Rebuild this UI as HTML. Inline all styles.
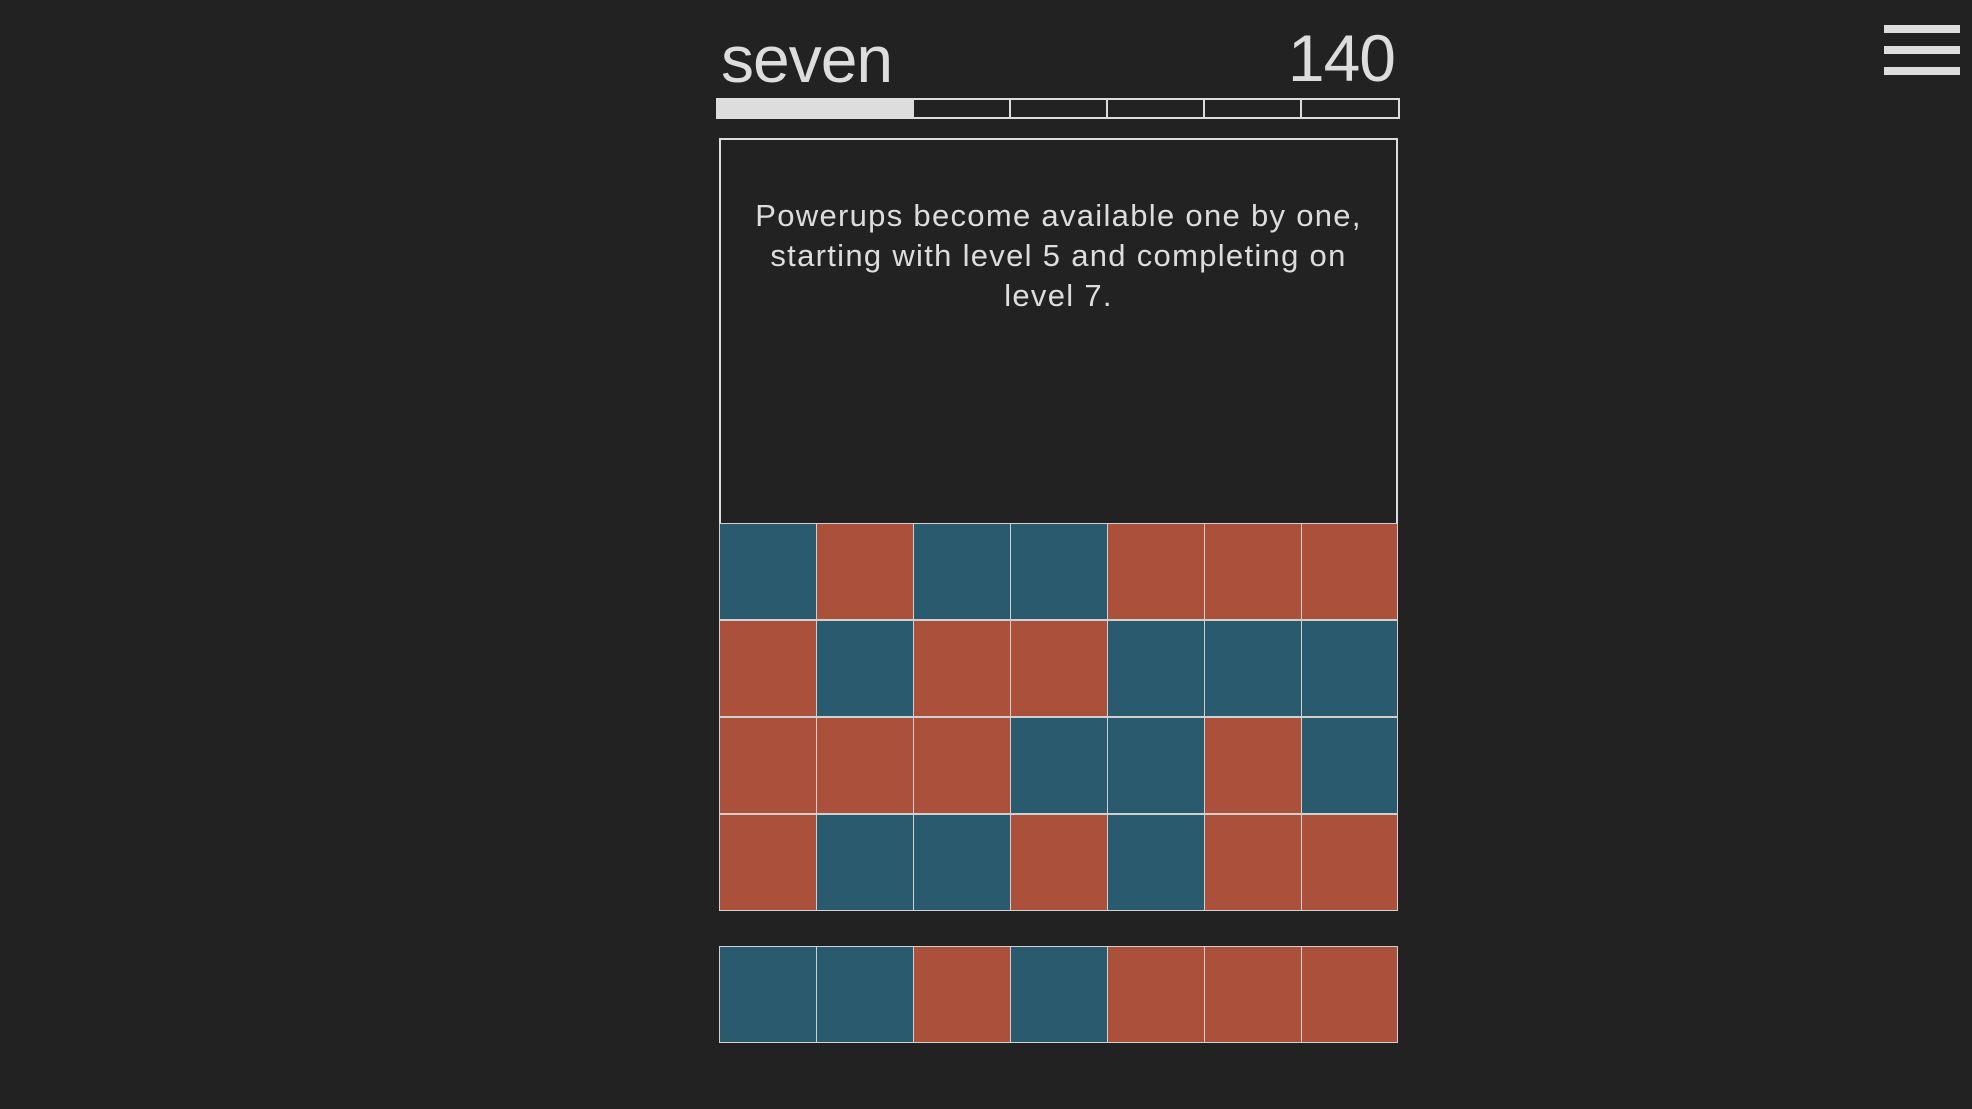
<!DOCTYPE html>
<html><head><meta charset="utf-8"><style>
html,body{margin:0;padding:0;background:#222;width:1972px;height:1109px;overflow:hidden;font-family:"Liberation Sans",sans-serif;color:#ddd}
.abs{position:absolute}
.bar{position:absolute;left:1884px;width:76px;height:8px;background:#ddd}
.seg{position:absolute;top:98px;height:21px;box-sizing:border-box;border:2px solid #ddd}
.cell{position:absolute;width:97px;height:97px;box-sizing:border-box;border:1px solid #d0d0d0}
.b{background:#295a6d}.r{background:#ab503b}
</style></head><body>
<div class="abs" style="left:721px;top:19px;font-size:66px;line-height:80px;letter-spacing:-1px">seven</div>
<div class="abs" style="left:1200px;width:195px;text-align:right;top:18px;font-size:66px;line-height:80px;letter-spacing:-1px">140</div>
<div class="seg" style="left:716px;width:198px;background:#ddd"></div>
<div class="seg" style="left:912px;width:99px"></div>
<div class="seg" style="left:1009px;width:99px"></div>
<div class="seg" style="left:1106px;width:99px"></div>
<div class="seg" style="left:1203px;width:99px"></div>
<div class="seg" style="left:1300px;width:100px"></div>
<div class="bar" style="top:25px"></div>
<div class="bar" style="top:46px"></div>
<div class="bar" style="top:67px"></div>
<div class="abs" style="left:719px;top:138px;width:679px;height:772px;box-sizing:border-box;border:2px solid #ddd"></div>
<div class="abs" style="left:719px;top:196px;width:679px;text-align:center;font-size:31px;line-height:40px;letter-spacing:1.3px">Powerups become available one by one,<br>starting with level 5 and completing on<br>level 7.</div>
<div id="g"></div>
<script>
var rows=["brbbrrr","rbrrbbb","rrrbbrb","rbbrbrr"],h="";
function row(s,top){for(var i=0;i<7;i++){h+='<div class="cell '+s[i]+'" style="left:'+(719+i*97)+'px;top:'+top+'px;width:'+(i==6?97:98)+'px"></div>';}}
for(var r=0;r<4;r++)row(rows[r],523+r*97);
row("bbrbrrr",946);
document.getElementById("g").innerHTML=h;
</script>
</body></html>
